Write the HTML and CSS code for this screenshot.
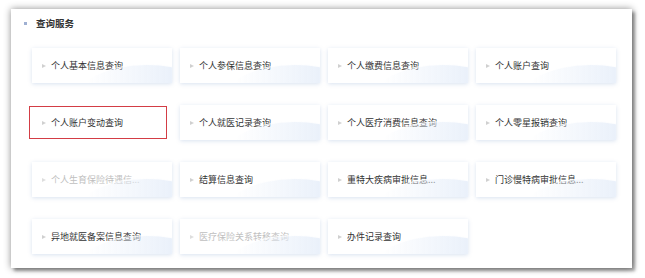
FILE: index.html
```html
<!DOCTYPE html>
<html lang="zh">
<head>
<meta charset="utf-8">
<link rel="stylesheet" href="styles.css">
</head>
<body>
<div class="panel">
  <div class="heading"><span class="dot"></span><span class="title">查询服务</span></div>
  <div class="grid">
    <div class="card"><span class="arrow"></span>个人基本信息查询</div>
    <div class="card"><span class="arrow"></span>个人参保信息查询</div>
    <div class="card"><span class="arrow"></span>个人缴费信息查询</div>
    <div class="card"><span class="arrow"></span>个人账户查询</div>
    <div class="card active"><span class="arrow"></span>个人账户变动查询</div>
    <div class="card"><span class="arrow"></span>个人就医记录查询</div>
    <div class="card"><span class="arrow"></span>个人医疗消费信息查询</div>
    <div class="card"><span class="arrow"></span>个人零星报销查询</div>
    <div class="card disabled"><span class="arrow"></span>个人生育保险待遇信...</div>
    <div class="card"><span class="arrow"></span>结算信息查询</div>
    <div class="card"><span class="arrow"></span>重特大疾病审批信息...</div>
    <div class="card"><span class="arrow"></span>门诊慢特病审批信息...</div>
    <div class="card"><span class="arrow"></span>异地就医备案信息查询</div>
    <div class="card disabled"><span class="arrow"></span>医疗保险关系转移查询</div>
    <div class="card"><span class="arrow"></span>办件记录查询</div>
  </div>
</div>
</body>
</html>
```
FILE: styles.css
```css
html, body {
  margin: 0;
  padding: 0;
  background: #ffffff;
}
body {
  width: 645px;
  height: 278px;
  overflow: hidden;
  font-family: "Noto Sans CJK SC", "Noto Sans", sans-serif;
  padding-top: 9px;
  box-sizing: border-box;
}
.panel {
  box-sizing: border-box;
  margin: 0 0 0 11px;
  width: 621px;
  height: 259px;
  background: #fff;
  box-shadow: 0 0 7px rgba(0,0,0,0.45), 3px 3px 3px rgba(0,0,0,0.35);
  padding: 8px 16px 0 13px;
}
.heading {
  display: flex;
  align-items: center;
  height: 12px;
}
.dot {
  width: 3px;
  height: 3px;
  background: #9fb0d2;
  margin-right: 9px;
}
.title {
  font-size: 9.5px;
  font-weight: bold;
  color: #333;
  line-height: 12px;
}
.grid {
  margin-top: 19px;
  margin-left: 8px;
  display: grid;
  grid-template-columns: repeat(4, 140px);
  grid-auto-rows: 35px;
  column-gap: 8px;
  row-gap: 22px;
}
.card {
  position: relative;
  overflow: hidden;
  box-sizing: border-box;
  background: #fff;
  box-shadow: 0 1px 4px rgba(120,150,200,0.28);
  display: flex;
  align-items: center;
  padding-left: 10px;
  font-size: 9px;
  color: #333;
  white-space: nowrap;
}
.card::after {
  content: "";
  position: absolute;
  right: -50px;
  bottom: -62px;
  width: 150px;
  height: 80px;
  border-radius: 50%;
  background: linear-gradient(to right, rgba(232,240,251,0) 10%, #e9f0fa 70%);
  border-top: 1px solid rgba(255,255,255,0.9);
}
.arrow {
  width: 0;
  height: 0;
  border-left: 4px solid #d0d0d0;
  border-top: 2.5px solid transparent;
  border-bottom: 2.5px solid transparent;
  margin-right: 5px;
}
.card.disabled {
  color: #c0c0c0;
}
.card.disabled .arrow {
  border-left-color: #dedede;
}
.card.active {
  margin: 1px 5px 1px -3px;
  padding-left: 12px;
  border: 1.5px solid #d33d45;
  box-shadow: none;
}
.card.active::after {
  display: none;
}
```
